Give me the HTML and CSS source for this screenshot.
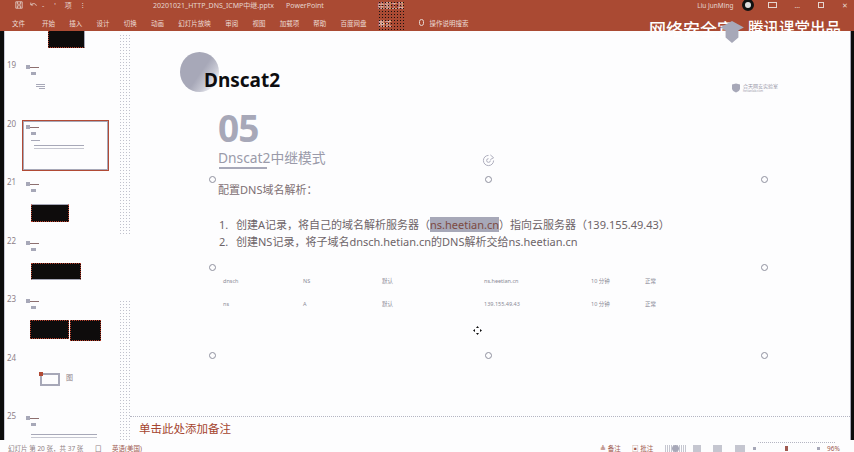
FILE: index.html
```html
<!DOCTYPE html>
<html lang="zh-CN">
<head>
    <meta charset="UTF-8">
    <title>20201021_HTTP_DNS_ICMP中继.pptx - PowerPoint</title>
    <link rel="stylesheet" href="styles.css">
</head>
<body>
<div class="app">
    <header class="ribbon">
        <div class="titlebar">
            <div class="quick">
                <svg class="qicon" viewBox="0 0 10 10"><path d="M1 1h8v8H1zM3 1v3h4V1M3 9V6h4v3" fill="none" stroke="#e6d5cf" stroke-width="1"/></svg>
                <svg class="qicon undo" viewBox="0 0 10 10"><path d="M1 2v3h3M1.500 5C3 2.500 7 2.500 8 6" fill="none" stroke="#e6d5cf" stroke-width="1"/></svg>
                <span class="q1">-</span>
                <span class="q2">'</span>
                <span class="q3">项</span>
                <span class="q4">⁝</span>
            </div>
            <div class="doc">20201021_HTTP_DNS_ICMP中继.pptx<span class="app-name">PowerPoint</span></div>
            <div class="tool">绘图工具</div>
            <div class="user">Liu JunMing</div>
            <div class="avatar"></div>
            <div class="win">
                <span class="winbox"></span>
                <span class="dots">…</span>
                <span class="winsq"></span>
                <span class="close">✕</span>
            </div>
        </div>
        <nav class="tabs">
            <span class="tab t1">文件</span>
            <span class="tab t2">开始</span>
            <span class="tab t2">插入</span>
            <span class="tab t2">设计</span>
            <span class="tab t2">切换</span>
            <span class="tab t2">动画</span>
            <span class="tab t3">幻灯片放映</span>
            <span class="tab t2">审阅</span>
            <span class="tab t2">视图</span>
            <span class="tab t4">加载项</span>
            <span class="tab t2">帮助</span>
            <span class="tab t7">百度网盘</span>
            <span class="tab t5">格式</span>
            <span class="bulb"></span>
            <span class="tab t6">操作说明搜索</span>
        </nav>
        <div class="noise"></div>
        <div class="watermark"><span>网络安全宣</span><span class="wm2">腾讯课堂出品</span></div>
        <svg class="wm-logo" viewBox="0 0 26 24"><path d="M13 0l13 7-6 3v8l-7 6-7-6v-8L0 7z" fill="#a7a8b8"/></svg>
    </header>

    <div class="main">
        <aside class="thumbs">
            <div class="thumb-top"><div class="blackbox top"></div></div>

            <div class="thumb-row">
                <span class="num">19</span>
                <div class="thumb">
                    <div class="mini-head"></div>
                    <div class="mini-line s1"></div>
                    <div class="mini-line s2"></div>
                    <div class="mini-line s3"></div>
                </div>
            </div>
            <div class="thumb-row">
                <span class="num">20</span>
                <div class="thumb current">
                    <div class="mini-head"></div>
                    <div class="mini-line s1"></div>
                    <div class="mini-line s5"></div>
                    <div class="mini-line s4"></div>
                </div>
            </div>
            <div class="thumb-row">
                <span class="num">21</span>
                <div class="thumb">
                    <div class="mini-head"></div>
                    <div class="mini-line s1"></div>
                    <div class="blackbox b21"></div>
                </div>
            </div>
            <div class="thumb-row">
                <span class="num">22</span>
                <div class="thumb">
                    <div class="mini-head"></div>
                    <div class="mini-line s1"></div>
                    <div class="blackbox b22"></div>
                </div>
            </div>
            <div class="thumb-row">
                <span class="num">23</span>
                <div class="thumb">
                    <div class="mini-head"></div>
                    <div class="mini-line s1"></div>
                    <div class="pair">
                        <div class="blackbox b23"></div>
                        <div class="blackbox b23b"></div>
                    </div>
                </div>
            </div>
            <div class="thumb-row">
                <span class="num">24</span>
                <div class="thumb">
                    <div class="diagram"><span class="dia-box"></span><span class="dia-t">图</span></div>
                </div>
            </div>
            <div class="thumb-row">
                <span class="num">25</span>
                <div class="thumb">
                    <div class="mini-head"></div>
                    <div class="mini-line s1"></div>
                    <div class="mini-line s6"></div>
                </div>
            </div>
        </aside>
        <div class="thumb-scroll">
            <div class="seg seg1"></div>
            <div class="seg seg2"></div>
        </div>

        <div class="work">
            <section class="slide">
                <div class="brand">
                    <div class="circle"></div>
                    <div class="brand-name">Dnscat2</div>
                    <div class="corner">
                        <svg class="shield" viewBox="0 0 8 9"><path d="M0 1l4-1 4 1v4c0 2-2 3-4 4C2 8 0 7 0 5z" fill="#a7a8b8"/></svg>
                        <div class="corner-text">合天网安实验室<small>hetianlab.com</small></div>
                    </div>
                </div>

                <div class="content">
                    <div class="big-num">05</div>
                    <div class="sub">Dnscat2中继模式</div>
                    <div class="under"></div>
                    <p class="intro">配置DNS域名解析：</p>
                    <ol class="steps">
                        <li><span class="n">1.</span>创建A记录，将自己的域名解析服务器（<span class="sel">ns.heetian.cn</span>）指向云服务器（139.155.49.43）</li>
                        <li><span class="n">2.</span>创建NS记录，将子域名dnsch.hetian.cn的DNS解析交给ns.heetian.cn</li>
                    </ol>
                    <div class="dns">
                        <div class="dns-row">
                            <span>dnsch</span><span>NS</span><span>默认</span><span>ns.heetian.cn</span><span>10 分钟</span><span>正常</span>
                        </div>
                        <div class="dns-row">
                            <span>ns</span><span>A</span><span>默认</span><span>139.155.49.43</span><span>10 分钟</span><span>正常</span>
                        </div>
                    </div>
                </div>

                <i class="handle h1"></i><i class="handle h2"></i><i class="handle h3"></i>
                <i class="handle h4"></i><i class="handle h5"></i>
                <i class="handle h6"></i><i class="handle h7"></i><i class="handle h8"></i>
                <svg class="rotate" viewBox="0 0 14 14"><path d="M7 1.500a5.500 5.500 0 1 0 5.500 5.500M9 1l3.500 3L9 6M7 5a2 2 0 1 0 2 2" fill="none" stroke="#a7a8b8" stroke-width="1"/></svg>
                <svg class="move" viewBox="0 0 9 9"><path d="M4.500 0l1.500 2H3zM4.500 9L3 7h3zM0 4.500L2 3v3zM9 4.500L7 6V3z" fill="#111"/></svg>
            </section>
            <div class="notes">单击此处添加备注</div>
        </div>
        <div class="edge"></div>
    </div>

    <footer class="status">
        <span class="st-a">幻灯片 第 20 张，共 37 张</span>
        <span class="st-b">囗</span>
        <span class="st-c">英语(美国)</span>
        <span class="st-d">≜ 备注</span>
        <span class="st-e">▣ 批注</span>
        <span class="view active"></span>
        <span class="view v2"></span>
        <span class="view v3"></span>
        <span class="view v4"></span>
        <span class="mark m1"></span>
        <span class="mark m2"></span>
        <span class="mark m3"></span>
        <span class="st-f">96%</span>
        <span class="slider-dots"></span>
    </footer>
</div>
</body>
</html>
```

FILE: styles.css
```css
* { box-sizing: border-box; }
html, body { margin: 0; height: 100%; overflow: hidden; }
body { font-family: "Noto Sans", "Noto Sans CJK SC", sans-serif; background: #fdfdfe; color: #6d6468; }

.app { width: 854px; height: 452px; display: flex; flex-direction: column; position: relative; overflow: hidden; }

/* ribbon */
.ribbon { height: 31px; flex: none; background: #aa4a33; color: #e6d5cf; position: relative; z-index: 2; font-size: 6.500px; }
.titlebar { height: 10px; display: flex; align-items: center; }
.quick { width: 153px; padding-left: 15px; display: flex; align-items: center; font-size: 7px; }
.qicon { width: 8px; height: 8px; flex: none; }
.undo { margin-left: 7px; }
.q1 { margin-left: 4px; }
.q2 { margin-left: 10px; }
.q3 { margin-left: 9px; }
.q4 { margin-left: 10px; }
.doc { width: 225px; font-size: 7px; white-space: nowrap; }
.app-name { margin-left: 12px; }
.tool { width: 30px; color: #e6d5cf; }
.user { margin-left: auto; font-size: 6.500px; white-space: nowrap; }
.avatar { width: 12px; height: 12px; border-radius: 50%; margin-left: 9px; border: 3px solid #111; background: #ddd; }
.win { display: flex; align-items: center; margin-left: 14px; padding-right: 6px; font-size: 7px; }
.winbox { width: 9px; height: 6px; border: 1px solid #e6d5cf; }
.dots { margin-left: 17px; }
.winsq { width: 6px; height: 6px; border: 1px solid #e6d5cf; margin-left: 18px; }
.close { margin-left: 18px; }

.tabs { height: 15px; margin-top: 5px; display: flex; align-items: center; padding-left: 12px; }
.tab { white-space: nowrap; color: #ecdcd6; }
.t1 { width: 30px; }
.t2 { width: 27.250px; }
.t3 { width: 47px; }
.t4 { width: 33.500px; }
.t5 { width: 40px; }
.t6 { margin-left: 6px; width: 45px; }
.t7 { width: 38px; }
.bulb { width: 5px; height: 7px; border: 1px solid #e6d5cf; border-radius: 3px; }

/* black speckle around the format tab */
.noise { position: absolute; left: 378px; top: 1px; width: 27px; height: 29px; background-image: radial-gradient(circle, #1a1010 0.600px, transparent 0.800px); background-size: 3px 3px; }

/* overlaid video watermark */
.watermark { position: absolute; left: 649px; top: 19px; display: flex; color: #fff; font-size: 17px; line-height: 22px; font-weight: 500; white-space: nowrap; }
.wm2 { margin: -2px 0 0 14px; font-size: 15.500px; }
.wm-logo { position: absolute; left: 719px; top: 21px; width: 26px; height: 22px; }

/* body */
.main { height: 409px; flex: none; display: flex; position: relative; border-left: 4px solid #0c0c0c; }
.thumbs { width: 115px; flex: none; border-left: 1px solid #c9cad6; overflow: hidden; }
.thumb-top { height: 17px; }
.blackbox { background: #0e0c0c; border: 1px dotted #b9402c; }
.top { width: 37px; height: 18px; margin: -1px 0 0 43px; border-right: 1px solid #a7a8b8; }

.thumb-row { height: 58.500px; display: flex; padding-left: 1px; }
.num { width: 16px; padding-left: 1px; padding-top: 13px; font-size: 8px; color: #8d7f88; line-height: 10px; }
.thumb { width: 87px; height: 51px; padding: 4px 0 0 4px; margin-top: 14px; }
.current { border: 2px solid #b14a35; outline: 1px solid #a7a8b8; outline-offset: -2px; padding: 3px 0 0 2px; }

.mini-head { width: 4px; height: 4px; background: #a7a8b8; position: relative; }
.mini-head::after { content: ""; position: absolute; left: 4px; top: 2px; width: 9px; height: 1px; background: #8d6f6f; }
.mini-line { height: 1px; background: #a7a8b8; }
.s1 { width: 5px; height: 3px; margin: 3px 0 0 5px; }
.s2 { width: 9px; margin: 9px 0 0 10px; box-shadow: 0 2px 0 #a7a8b8; }
.s3 { width: 6px; margin: 3px 0 0 13px; }
.s5 { width: 9px; margin: 5px 0 0 5px; }
.s4 { width: 50px; margin: 4px 0 0 8px; box-shadow: 0 3px 0 #c5c6d0; }
.s6 { width: 66px; margin: 8px 0 0 5px; box-shadow: 0 3px 0 #c5c6d0; }

.b21 { width: 38px; height: 18px; margin: 12px 0 0 5px; border-top: 1px solid #a7a8b8; }
.b22 { width: 50px; height: 17px; margin: 12px 0 0 5px; border-bottom: 1px solid #a7a8b8; }
.pair { display: flex; gap: 1px; margin: 11px 0 0 4px; }
.b23 { width: 39px; height: 19px; }
.b23b { width: 31px; height: 21px; background: #0e0c0c; border: 1px dotted #b9402c; }

.diagram { display: flex; align-items: flex-start; margin: 15px 0 0 14px; }
.dia-box { width: 20px; height: 13px; border: 2px solid #a7a8b8; position: relative; }
.dia-box::before { content: ""; position: absolute; left: -3px; top: -3px; width: 4px; height: 4px; background: #b14a35; }
.dia-t { margin-left: 6px; font-size: 7px; line-height: 9px; color: #8d7f88; }

.thumb-scroll { width: 11px; flex: none; display: flex; flex-direction: column; justify-content: space-between; padding: 3px 0 0; }
.seg { background-image: radial-gradient(circle, #c0c1cc 0.600px, transparent 0.800px); background-size: 3px 3px; }
.seg1 { height: 202px; }
.seg2 { height: 140px; }

.work { flex: 1; display: flex; flex-direction: column; }
.slide { flex: 1; position: relative; background: #fdfdfe; }
.edge { width: 4px; flex: none; background: #0c0c0c; border-left: 1px solid #a7a8b8; }

/* slide header */
.brand { display: flex; align-items: flex-start; height: 62px; padding: 21px 58px 0 50px; }
.circle { width: 39px; height: 40px; border-radius: 50%; background: linear-gradient(125deg, #a7a8b8 52%, #c8c9d4 72%, #fdfdfe 92%); flex: none; }
.brand-name { margin: 14px 0 0 -15px; font-size: 19px; line-height: 28px; font-weight: 700; color: #0d0d10; position: relative; }
.corner { display: flex; align-items: center; gap: 3px; margin: 31px 0 0 auto; width: 60px; }
.shield { width: 8px; height: 10px; flex: none; }
.corner-text { font-size: 5px; line-height: 6px; color: #9a9aa9; white-space: nowrap; }
.corner-text small { display: block; font-size: 3px; line-height: 4px; }

.content { padding: 17px 0 0 88px; }
.big-num { font-size: 37px; line-height: 36px; font-weight: 700; color: #a7a8b8; letter-spacing: -1px; }
.sub { font-size: 13.800px; line-height: 18px; margin-top: 3px; color: #9a9aa9; }
.under { width: 48px; height: 2px; background: #a7a8b8; margin: 0 0 0 1px; }
.intro { margin: 13px 0 0; font-size: 11px; line-height: 16px; color: #7d6f73; }
.steps { list-style: none; margin: 18px 0 0; padding: 0; font-size: 11px; line-height: 17px; color: #6d6468; }
.steps li { display: block; white-space: nowrap; }
.n { display: inline-block; width: 18px; padding-left: 1px; }
.sel { background: #a7a8b8; color: #7d4a42; }

.dns { margin-top: 26px; margin-left: 5px; font-size: 5.500px; color: #8a8a96; }
.dns-row { display: grid; grid-template-columns: 80px 79px 102px 107px 54px 30px; height: 22.500px; line-height: 10px; }

.handle { position: absolute; width: 7px; height: 7px; border-radius: 50%; border: 1px solid #8f909e; background: #fdfdfe; }
.h1 { left: 79px; top: 145px; }
.h2 { left: 355px; top: 145px; }
.h3 { left: 631px; top: 145px; }
.h4 { left: 79px; top: 233px; }
.h5 { left: 631px; top: 233px; }
.h6 { left: 79px; top: 321px; }
.h7 { left: 355px; top: 321px; }
.h8 { left: 631px; top: 321px; }
.rotate { position: absolute; left: 352px; top: 123px; width: 13px; height: 13px; }
.move { position: absolute; left: 343px; top: 295px; width: 9px; height: 9px; }

/* notes + status */
.notes { height: 24px; flex: none; border-top: 1px dotted #b4b5c2; padding-left: 9px; padding-top: 3px; font-size: 11.500px; line-height: 18px; color: #a5452f; }
.status { height: 12px; flex: none; display: flex; align-items: flex-start; padding-top: 5px; font-size: 6.500px; line-height: 7px; color: #8f7f84; white-space: nowrap; position: relative; }
.st-a { margin-left: 8px; width: 87px; }
.st-b { width: 17px; }
.st-c { width: 488px; color: #a05a50; }
.st-d { width: 32px; color: #a05a50; }
.st-e { width: 33px; color: #a05a50; }
.view { width: 9px; height: 7px; background: #c5c6d0; }
.active { width: 21px; background: radial-gradient(circle, #a7a8b8 3px, transparent 4px), repeating-linear-gradient(90deg, #c5c6d0 0 1px, transparent 1px 2px); }
.v2 { margin-left: 7px; width: 8px; }
.v3 { margin-left: 12px; }
.v4 { margin-left: 13px; width: 10px; }
.mark { width: 3px; height: 3px; margin-top: 2px; }
.m1 { margin-left: 8px; background: #a7a8b8; }
.m2 { margin-left: 29px; background: #a05a50; height: 5px; margin-top: 1px; }
.m3 { margin-left: 29px; background: #a7a8b8; }
.st-f { margin-left: 7px; color: #a05a50; }
.slider-dots { position: absolute; left: 758px; top: 2px; width: 77px; height: 1px; border-top: 1px dotted #b4b5c2; }
```
